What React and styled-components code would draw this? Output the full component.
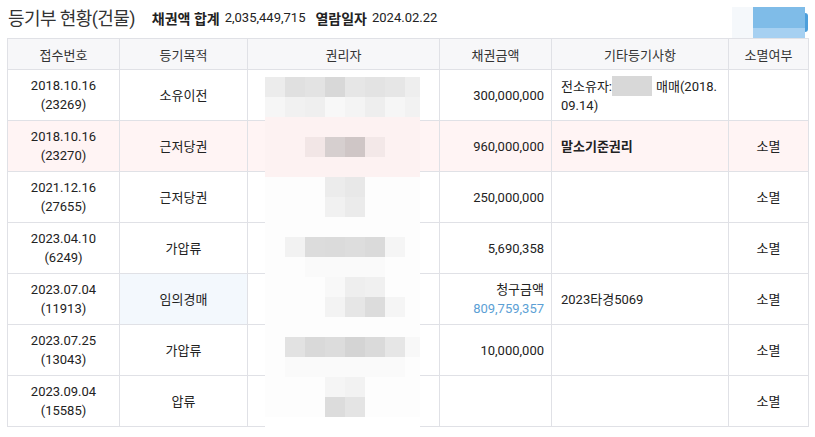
import React from "react";
import styled, { createGlobalStyle } from "styled-components";

const Global = createGlobalStyle`
  html, body { margin: 0; padding: 0; background: #fff; }
  body { font-family: Roboto, "Noto Sans CJK KR", sans-serif; color: #222; }
`;

const Page = styled.div`
  position: relative;
  width: 815px;
  height: 437px;
  padding: 0 7px;
  box-sizing: border-box;
  overflow: hidden;
`;

const TitleBar = styled.div`
  display: flex;
  align-items: center;
  height: 38px;
`;

const Title = styled.h2`
  margin: 0 0 4px 1px;
  font-size: 18px;
  font-weight: 400;
  color: #333;
  letter-spacing: -0.6px;
`;

const Summary = styled.span`
  font-size: ${(p) => (p.$bold ? 14 : 13)}px;
  margin: 0 0 3px ${(p) => p.$gap}px;
  color: #222;
  font-weight: ${(p) => (p.$bold ? 700 : 400)};
`;

const BlurButton = styled.div`
  margin-left: auto;
  align-self: flex-end;
  display: flex;
  height: 31px;
`;

const BlurLight = styled.div`
  width: 21px;
  background: #f5f8fb;
`;

const BlurBlue = styled.div`
  width: 52px;
  background: linear-gradient(#7fbce8 0, #7fbce8 21px, #a6d0f1 21px);
`;

const BlurCap = styled.div`
  width: 3px;
  margin: 6px 0 6px;
  border-radius: 0 3px 3px 0;
  background: #4d9fdb;
`;

const Table = styled.table`
  border-collapse: collapse;
  table-layout: fixed;
  width: 801px;
  font-size: 13px;
`;

const HeadCell = styled.th`
  height: 30px;
  padding: 0;
  background: #f7f7f9;
  border: 1px solid #e0e1e6;
  font-weight: 400;
  color: #333;
  text-align: center;
  font-family: "Noto Sans CJK KR", sans-serif;
`;

const Row = styled.tr`
  background: ${(p) => (p.$bg ? p.$bg : "#fff")};
`;

const Cell = styled.td`
  height: 50px;
  padding: 0 ${(p) => p.$pad || 7}px;
  border: 1px solid #e0e1e6;
  text-align: ${(p) => p.$align || "center"};
  vertical-align: middle;
  line-height: 19px;
  background: ${(p) => p.$bg || "transparent"};
  font-weight: ${(p) => (p.$bold ? 700 : 400)};
`;

const Claim = styled.span`
  color: #5c9fd5;
`;

const Redacted = styled.span`
  display: inline-block;
  width: 40px;
  height: 20px;
  vertical-align: -5px;
  background: #d8d8d8;
  margin-right: 4px;
`;

const Mosaic = styled.div`
  position: absolute;
  left: 265px;
  top: 77px;
  display: grid;
  grid-template-columns: repeat(7, 20px) 15px;
  grid-auto-rows: 20px;
`;

const Block = styled.div`
  background: ${(p) => p.$c};
`;

const W = "#fdfdfd";
const P = "#fdf2f2";
const mosaicRows = [
  ["#ececec", "#e0e0e0", "#e3e3e3", "#d8d8d8", "#e6e6e6", "#e3e3e3", "#e6e6e6", "#eeeeee"],
  ["#f6f6f6", "#f1f1f1", "#efefef", "#f8f8f8", "#f4f4f4", "#eeeeee", "#f6f6f6", "#f2f2f2"],
  [P, P, P, P, P, P, P, P],
  [P, P, "#f2e6e6", "#d6cfcf", "#cfc6c6", "#f3e8e8", P, P],
  [P, P, P, P, P, P, P, P],
  [W, W, W, "#ececec", "#e8e8e8", W, W, W],
  [W, W, W, "#f1f1f1", "#ebebeb", W, W, W],
  [W, W, W, W, W, W, W, W],
  [W, "#f2f2f2", "#dcdcdc", "#dbdbdb", "#dddddd", "#dadada", "#f5f5f5", W],
  [W, W, "#fafafa", "#fafafa", "#fafafa", "#fafafa", W, W],
  [W, W, W, "#f8f8f8", "#eeeeee", "#f0f0f0", W, W],
  [W, W, W, "#f3f3f3", "#e6e6e6", "#dcdcdc", "#f5f5f5", W],
  [W, W, W, W, W, W, W, W],
  [W, "#e2e2e2", "#d9d9d9", "#dcdcdc", "#d4d4d4", "#dadada", "#e6e6e6", "#f8f8f8"],
  [W, "#fafafa", "#fafafa", "#fafafa", "#fafafa", "#fafafa", "#fafafa", W],
  [W, W, W, "#f5f5f5", "#f2f2f2", W, W, W],
  [W, W, W, "#dcdcdc", "#e4e4e4", W, W, W],
  ["#fff", "#fff", "#fff", "#fff", "#fff", "#fff", "#fff", "#fff"],
];

const rows = [
  { date: "2018.10.16", no: "23269", purpose: "소유이전", amount: "300,000,000", etc: "owner", gone: "" },
  { date: "2018.10.16", no: "23270", purpose: "근저당권", amount: "960,000,000", etc: "말소기준권리", bold: true, gone: "소멸", bg: "#fff4f4" },
  { date: "2021.12.16", no: "27655", purpose: "근저당권", amount: "250,000,000", etc: "", gone: "소멸" },
  { date: "2023.04.10", no: "6249", purpose: "가압류", amount: "5,690,358", etc: "", gone: "소멸" },
  { date: "2023.07.04", no: "11913", purpose: "임의경매", amount: "claim", etc: "2023타경5069", gone: "소멸", purposeBg: "#f3f8fd" },
  { date: "2023.07.25", no: "13043", purpose: "가압류", amount: "10,000,000", etc: "", gone: "소멸" },
  { date: "2023.09.04", no: "15585", purpose: "압류", amount: "", etc: "", gone: "소멸" },
];

export default function App() {
  return (
    <>
      <Global />
      <Page>
        <TitleBar>
          <Title>등기부 현황(건물)</Title>
          <Summary $bold $gap={17}>채권액 합계</Summary>
          <Summary $gap={5}>2,035,449,715</Summary>
          <Summary $bold $gap={10}>열람일자</Summary>
          <Summary $gap={5}>2024.02.22</Summary>
          <BlurButton>
            <BlurLight />
            <BlurBlue />
            <BlurCap />
          </BlurButton>
        </TitleBar>
        <Table>
          <colgroup>
            <col style={{ width: 112 }} />
            <col style={{ width: 128 }} />
            <col style={{ width: 192 }} />
            <col style={{ width: 112 }} />
            <col style={{ width: 177 }} />
            <col style={{ width: 80 }} />
          </colgroup>
          <thead>
            <tr>
              <HeadCell>접수번호</HeadCell>
              <HeadCell>등기목적</HeadCell>
              <HeadCell>권리자</HeadCell>
              <HeadCell>채권금액</HeadCell>
              <HeadCell>기타등기사항</HeadCell>
              <HeadCell>소멸여부</HeadCell>
            </tr>
          </thead>
          <tbody>
            {rows.map((r, i) => (
              <Row key={i} $bg={r.bg}>
                <Cell>
                  {r.date}
                  <br />({r.no})
                </Cell>
                <Cell $bg={r.purposeBg}>{r.purpose}</Cell>
                <Cell />
                <Cell $align="right">
                  {r.amount === "claim" ? (
                    <>
                      청구금액
                      <br />
                      <Claim>809,759,357</Claim>
                    </>
                  ) : (
                    r.amount
                  )}
                </Cell>
                <Cell $align="left" $pad={9} $bold={r.bold}>
                  {r.etc === "owner" ? (
                    <>
                      전소유자:<Redacted />매매(2018.
                      <br />
                      09.14)
                    </>
                  ) : (
                    r.etc
                  )}
                </Cell>
                <Cell>{r.gone}</Cell>
              </Row>
            ))}
          </tbody>
        </Table>
        <Mosaic>
          {mosaicRows.flatMap((row, y) =>
            row.map((c, x) => <Block key={`${y}-${x}`} $c={c} />)
          )}
        </Mosaic>
      </Page>
    </>
  );
}
